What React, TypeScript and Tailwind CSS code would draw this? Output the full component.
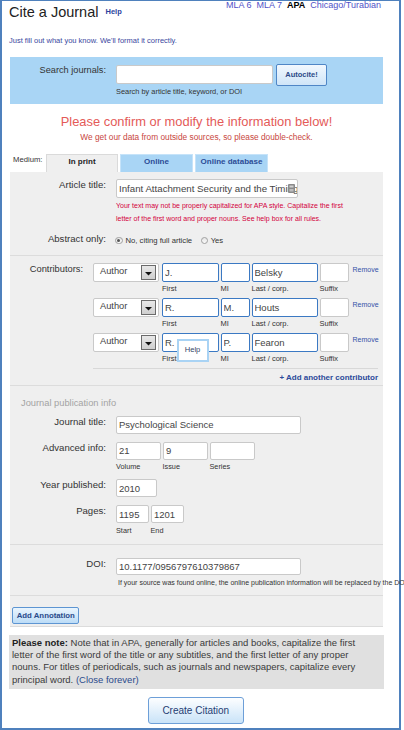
import React from "react";

function Field({
  value = "",
  w,
  h,
  blue = false,
  text = "text-[9.5px]",
}: {
  value?: string;
  w: string;
  h: string;
  blue?: boolean;
  text?: string;
}) {
  return (
    <input
      readOnly
      value={value}
      className={`${w} ${h} ${text} block bg-white rounded-[2px] pl-[2px] text-[#444] outline-none font-[family-name:'Liberation_Sans',Arial,sans-serif] ${
        blue ? "border-[1.3px] border-[#3b79c3]" : "border border-[#c9c9c9]"
      }`}
    />
  );
}

function Label({ children, w = "w-[96px]" }: { children: React.ReactNode; w?: string }) {
  return <div className={`${w} shrink-0 text-right text-[9.6px] leading-[12px] text-[#333]`}>{children}</div>;
}

function AuthorSelect() {
  return (
    <div className="w-[66px] h-[19px] shrink-0 bg-white border border-[#c9c9c9] rounded-[2px] flex items-center">
      <span className="pl-[6px] text-[9.3px] text-[#444]">Author</span>
      <span className="ml-auto mr-[2px] w-[15px] h-[15px] border border-[#6b6b6b] bg-linear-to-b from-[#e8e8e8] to-[#cfcfcf] flex justify-center items-start pt-[6px]">
        <svg width="7" height="4" viewBox="0 0 7 4">
          <polygon points="0,0 7,0 3.5,3.5" fill="#111" />
        </svg>
      </span>
    </div>
  );
}

function ContributorRow({
  first,
  mi,
  last,
  tooltip = false,
}: {
  first: string;
  mi: string;
  last: string;
  tooltip?: boolean;
}) {
  return (
    <div>
      <div className="flex items-start h-[19px]">
        <AuthorSelect />
        <div className="relative ml-[3px]">
          <Field value={first} w="w-[57px]" h="h-[19px]" blue />
          {tooltip && (
            <div className="absolute left-[14.5px] top-[6px] z-10 w-[32px] h-[23px] bg-white border-2 border-[#a9d3f4] flex items-center justify-center text-[7.6px] text-[#334466]">
              Help
            </div>
          )}
        </div>
        <div className="ml-[1.5px]">
          <Field value={mi} w="w-[29px]" h="h-[19px]" blue />
        </div>
        <div className="ml-[2px]">
          <Field value={last} w="w-[66px]" h="h-[19px]" blue />
        </div>
        <div className="ml-[2px]">
          <Field w="w-[29px]" h="h-[19px]" />
        </div>
        <span className="ml-[4px] mt-[2.5px] text-[7px] leading-[10px] text-[#3352a8]">Remove</span>
      </div>
      <div className="flex mt-[2px] text-[7.5px] leading-[10px] text-[#333]">
        <span className="ml-[69px] w-[58.5px]">First</span>
        <span className="w-[31px]">MI</span>
        <span className="w-[68px]">Last / corp.</span>
        <span>Suffix</span>
      </div>
    </div>
  );
}

function Radio({ checked }: { checked?: boolean }) {
  return (
    <span className="w-[7.5px] h-[7.5px] rounded-full border border-[#a0a0a0] bg-linear-to-b from-[#e6e6e6] to-[#fafafa] flex items-center justify-center shrink-0">
      {checked && <span className="w-[3px] h-[3px] rounded-full bg-[#555]" />}
    </span>
  );
}

export default function App() {
  return (
    <div className="w-[404px] h-[730px] overflow-hidden bg-white font-[family-name:'Liberation_Sans',Arial,sans-serif] text-[#333]">
      <div className="w-[401px] h-[730px] border-x-2 border-b-2 border-t border-[#4f81bd] flex flex-col">
        {/* Header */}
        <div className="flex justify-between items-start h-[35px] shrink-0">
          <div className="flex items-center pl-[7px] pt-[2.5px]">
            <span className="text-[14.5px] leading-[17px] text-[#222]">Cite a Journal</span>
            <span className="ml-[7px] text-[7.5px] font-bold leading-[10px] text-[#2b3f9e]">Help</span>
          </div>
          <div className="flex gap-[5px] mr-[18px] -mt-[1.5px] text-[9px] leading-[11px]">
            <span className="text-[#5252c8]">MLA 6</span>
            <span className="text-[#5252c8]">MLA 7</span>
            <span className="text-black font-bold">APA</span>
            <span className="text-[#5252c8]">Chicago/Turabian</span>
          </div>
        </div>
        <div className="pl-[7px] text-[7.5px] leading-[10px] text-[#3a47a0]">
          Just fill out what you know. We'll format it correctly.
        </div>

        {/* Search */}
        <div className="mt-[11px] ml-[8px] w-[373px] h-[46.5px] shrink-0 bg-[#a9d5f5] flex pt-[7.5px]">
          <div className="w-[96px] text-right text-[9.2px] leading-[11px] text-[#333]">Search journals:</div>
          <div className="ml-[10px]">
            <div className="flex items-start">
              <Field w="w-[157px]" h="h-[19px]" />
              <button className="ml-[3px] -mt-[1px] w-[51px] h-[22px] rounded-[2px] border border-[#4f86c6] bg-linear-to-b from-[#f2f8fe] to-[#cfe5f8] text-[7.5px] font-bold text-[#2c4a88]">
                Autocite!
              </button>
            </div>
            <div className="mt-[1px] text-[7.4px] leading-[10px] text-[#333]">
              Search by article title, keyword, or DOI
            </div>
          </div>
        </div>

        {/* Confirm heading */}
        <div className="mt-[10px] ml-[8px] w-[373px] text-center">
          <div className="text-[12.9px] leading-[15px] text-[#e45a58]">
            Please confirm or modify the information below!
          </div>
          <div className="mt-[3px] text-[8.3px] leading-[10px] text-[#c8463e]">
            We get our data from outside sources, so please double-check.
          </div>
        </div>

        {/* Tabs */}
        <div className="mt-[12px] ml-[11px] h-[18px] flex items-start shrink-0">
          <span className="w-[33px] mt-[1px] text-[7.7px] leading-[10px] text-[#333]">Medium:</span>
          <div className="w-[72px] h-[18px] bg-[#efefef] border-t border-x border-[#dadada] text-center pt-[2px] text-[8px] leading-[10px] font-bold text-[#222]">
            In print
          </div>
          <div className="ml-[2px] w-[73px] h-[18px] bg-[#a9d5f5] border-t border-x border-[#c6e3f9] text-center pt-[2px] text-[8px] leading-[10px] font-bold text-[#2c4c96]">
            Online
          </div>
          <div className="ml-[2px] w-[73px] h-[18px] bg-[#a9d5f5] border-t border-x border-[#c6e3f9] text-center pt-[2px] text-[8px] leading-[10px] font-bold text-[#2c4c96]">
            Online database
          </div>
        </div>

        {/* Gray panel */}
        <div className="ml-[8px] w-[373px] bg-[#efefef] shrink-0 border-b border-[#dcdcdc]">
          {/* Section 1 */}
          <div className="pt-[7px] pb-[8px] border-b border-[#dcdcdc]">
            <div className="flex">
              <Label>Article title:</Label>
              <div className="ml-[10px]">
                <div className="relative w-[182px]">
                  <Field
                    value="Infant Attachment Security and the Timing of Puberty: Testing an Evolutionary Hypothesis"
                    w="w-[182px]"
                    h="h-[19px]"
                    text="text-[9.7px]"
                  />
                  <svg className="absolute right-[3px] top-[5px]" width="7" height="9" viewBox="0 0 7 9">
                    <rect x="0" y="0" width="7" height="9" rx="1" fill="#8a8a8a" />
                    <rect x="1.5" y="1.5" width="4" height="2" fill="#d0d0d0" />
                    <rect x="1.5" y="5" width="4" height="2.5" fill="#bdbdbd" />
                  </svg>
                </div>
                <div className="mt-[1.5px] text-[7px] leading-[13px] text-[#d3003c] whitespace-nowrap">
                  Your text may not be properly capitalized for APA style. Capitalize the first
                  <br />
                  letter of the first word and proper nouns. See help box for all rules.
                </div>
              </div>
            </div>
            <div className="flex mt-[7.5px]">
              <Label>Abstract only:</Label>
              <div className="ml-[9px] mt-[2px] flex items-center text-[7.7px] leading-[12px] text-[#333]">
                <Radio checked />
                <span className="ml-[3px]">No, citing full article</span>
                <span className="ml-[8.5px]">
                  <Radio />
                </span>
                <span className="ml-[2.5px]">Yes</span>
              </div>
            </div>
          </div>

          {/* Section 2: contributors */}
          <div className="pt-[7px] pb-[2px] border-b border-[#dcdcdc] flex">
            <Label w="w-[73px]">
              <span className="text-[9.3px]">Contributors:</span>
            </Label>
            <div className="ml-[10px] w-[285px]">
              <div className="flex flex-col gap-[4px]">
                <ContributorRow first="J." mi="" last="Belsky" />
                <ContributorRow first="R." mi="M." last="Houts" />
                <ContributorRow first="R. H." mi="P." last="Fearon" tooltip />
              </div>
              <div className="mt-[4px] border-t border-[#d8d8d8]" />
              <div className="mt-[4px] text-right text-[8px] leading-[10px] font-bold text-[#2b4a9a]">
                + Add another contributor
              </div>
            </div>
          </div>

          {/* Section 3: journal info */}
          <div className="pt-[12.5px] pb-[8px] border-b border-[#dcdcdc]">
            <div className="pl-[11px] text-[9.3px] leading-[10px] text-[#a3a3a3]">Journal publication info</div>
            <div className="flex mt-[8px]">
              <Label>Journal title:</Label>
              <div className="ml-[10px]">
                <Field value="Psychological Science" w="w-[185px]" h="h-[17.5px]" />
              </div>
            </div>
            <div className="flex mt-[8px]">
              <Label>Advanced info:</Label>
              <div className="ml-[10px]">
                <div className="flex gap-[2px]">
                  <Field value="21" w="w-[45px]" h="h-[18px]" />
                  <Field value="9" w="w-[45px]" h="h-[18px]" />
                  <Field w="w-[45px]" h="h-[18px]" />
                </div>
                <div className="flex mt-[2.5px] text-[7.3px] leading-[10px] text-[#333]">
                  <span className="w-[46.5px]">Volume</span>
                  <span className="w-[47px]">Issue</span>
                  <span>Series</span>
                </div>
              </div>
            </div>
            <div className="flex mt-[7px]">
              <Label>Year published:</Label>
              <div className="ml-[10px]">
                <Field value="2010" w="w-[40.5px]" h="h-[18px]" />
              </div>
            </div>
            <div className="flex mt-[8px]">
              <Label>Pages:</Label>
              <div className="ml-[10px]">
                <div className="flex gap-[2.5px]">
                  <Field value="1195" w="w-[32.5px]" h="h-[18px]" />
                  <Field value="1201" w="w-[32.5px]" h="h-[18px]" />
                </div>
                <div className="flex mt-[2.5px] text-[7.3px] leading-[10px] text-[#333]">
                  <span className="w-[34.5px]">Start</span>
                  <span>End</span>
                </div>
              </div>
            </div>
          </div>

          {/* Section 4: DOI */}
          <div className="pt-[13px] pb-[8px] border-b border-[#dcdcdc]">
            <div className="flex">
              <Label>DOI:</Label>
              <div className="ml-[10px]">
                <Field value="10.1177/0956797610379867" w="w-[185px]" h="h-[17.5px]" />
                <div className="ml-[2px] mt-[3px] text-[7px] leading-[9px] text-[#333] whitespace-nowrap">
                  If your source was found online, the online publication information will be replaced by the DOI.
                </div>
              </div>
            </div>
          </div>

          {/* Section 5: annotation */}
          <div className="pt-[4.5px] pb-[1.5px] pl-[2.3px]">
            <button className="w-[67px] h-[17px] rounded-[2px] border border-[#5d95d2] bg-linear-to-b from-[#eaf5fe] to-[#bcdcf6] text-[7.8px] font-bold text-[#2a4a8a]">
              Add Annotation
            </button>
          </div>
        </div>

        {/* Please note */}
        <div className="mt-[7.5px] ml-[7px] w-[375px] bg-[#e0e0e0] pt-[2px] pb-[3px] px-[3px] text-[9.5px] leading-[12.4px] text-[#3a3a3a] whitespace-nowrap shrink-0">
          <b className="text-[#222]">Please note:</b> Note that in APA, generally for articles and books, capitalize the first
          <br />
          letter of the first word of the title or any subtitles, and the first letter of any proper
          <br />
          nouns. For titles of periodicals, such as journals and newspapers, capitalize every
          <br />
          principal word. <span className="text-[#2b4a8c]">(Close forever)</span>
        </div>

        {/* Create citation */}
        <div className="mt-[7.5px] ml-[146px]">
          <button className="w-[95.5px] h-[27.5px] rounded-[3px] border border-[#6d9fd8] bg-linear-to-b from-[#fdfeff] to-[#c9e3f8] text-[10px] text-[#1f3d73]">
            Create Citation
          </button>
        </div>
      </div>
    </div>
  );
}
